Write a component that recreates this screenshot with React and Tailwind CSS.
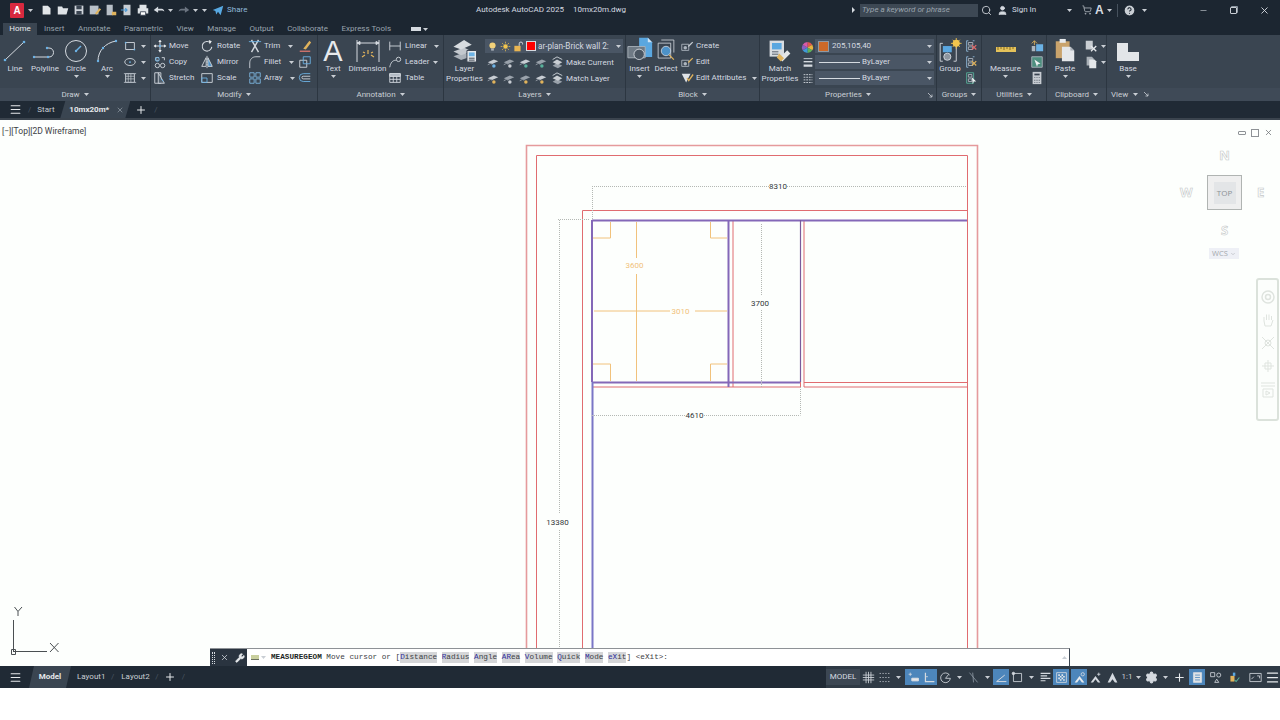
import { ChevronDown, Search, X, Minus, Plus, Menu, Wrench, Settings, HelpCircle, ShoppingCart, User } from "lucide-react"

// ─── Small icon helper, everything is drawn on a 16 box ───────────────────────
function Ic({ size = 14, children, className = "" }) {
  return (
    <svg width={size} height={size} viewBox="0 0 16 16" fill="none" stroke="#d5dae0" strokeWidth="1" className={`shrink-0 mx-[1px] ${className}`}>
      {children}
    </svg>
  )
}

const BLUE = "#6db3e6"
const GOLD = "#e0b35c"
const GREY = "#aeb6bf"

const Doc = () => <Ic><path d="M3 3h6l3 3v7H3z" fill="#e3e6e9" stroke="none" /></Ic>
const Folder = () => <Ic><path d="M2 4h5l1 2h6l-2 7H2z" fill="#dfe3e7" stroke="none" /></Ic>
const Save = () => <Ic><path d="M3 3h10v10H3z" fill="#cfd4da" stroke="none" /><path d="M5 3h6v4H5zM5 9h6v4H5z" fill="#3a4451" stroke="none" /></Ic>
const SaveAs = () => <Ic><path d="M2 3h10v10H2z" fill="#b9c0c8" stroke="none" /><path d="M8 12l5-6 2 1-5 6z" fill={GOLD} stroke="none" /></Ic>
const Sheet = () => <Ic><path d="M3 2h7v12H3z" fill="#b8bfc7" stroke="none" /><path d="M9 10h5v4H9z" fill={GOLD} stroke="none" /></Ic>
const Pub = () => <Ic><path d="M4 2h8v12H4z" fill="#c7cdd3" stroke="none" /><path d="M1 8h7M6 6l2 2-2 2" stroke="#4f9bd6" strokeWidth="1.4" /></Ic>
const Print = () => <Ic><path d="M4 2h8v4H4zM2 6h12v6H2z" fill="#dfe3e7" stroke="none" /><path d="M5 10h6v4H5z" fill="#fff" stroke="#3a4451" /></Ic>
const Undo = () => <Ic><path d="M2 8l5-4v2.500h4c2 0 3 1.500 3 3.500-1-1.500-2-1.500-3-1.500H7V11z" fill="#d5dae0" stroke="none" /></Ic>
const Redo = () => <Ic><path d="M14 8L9 4v2.500H5C3 6.500 2 8 2 10c1-1.500 2-1.500 3-1.500h4V11z" fill="#6b7480" stroke="none" /></Ic>
const ShareIc = () => <Ic><path d="M2 8l12-5-3 11-3-4-2 3-1-4z" fill="#58a9e2" stroke="none" /></Ic>

const LineIc = () => <svg width="26" height="24" viewBox="0 0 26 24" fill="none" stroke="#d5dae0" strokeWidth="1"><path d="M3 21L22 3" /><circle cx="3" cy="21" r="1.300" fill={BLUE} stroke="none" /><circle cx="22" cy="3" r="1.300" fill={BLUE} stroke="none" /></svg>
const PolyIc = () => <svg width="26" height="24" viewBox="0 0 26 24" fill="none" stroke="#d5dae0" strokeWidth="1"><path d="M2 18h15c6 0 6-9 0-9h-2" /><circle cx="2" cy="18" r="1.200" fill={BLUE} stroke="none" /><circle cx="16" cy="18" r="1.200" fill={BLUE} stroke="none" /><circle cx="15" cy="9" r="1.200" fill={BLUE} stroke="none" /></svg>
const CircleIc = () => <svg width="24" height="24" viewBox="0 0 24 24" fill="none" stroke="#d5dae0" strokeWidth="1"><circle cx="12" cy="12" r="10.500" /><path d="M12 12l5-5" stroke={BLUE} strokeWidth="1.500" /><circle cx="12" cy="12" r="1.200" fill={BLUE} stroke="none" /></svg>
const ArcIc = () => <svg width="24" height="24" viewBox="0 0 24 24" fill="none" stroke="#d5dae0" strokeWidth="1"><path d="M3 22C3 12 10 4 21 2" /><circle cx="3" cy="22" r="1.200" fill={BLUE} stroke="none" /><circle cx="8" cy="9" r="1.200" fill={BLUE} stroke="none" /><circle cx="21" cy="2" r="1.200" fill={BLUE} stroke="none" /></svg>
const RectIc = () => <Ic><path d="M3 4h10v8H3z" /><circle cx="3" cy="4" r="1" fill={BLUE} stroke="none" /><circle cx="13" cy="12" r="1" fill={BLUE} stroke="none" /></Ic>
const EllipseIc = () => <Ic><ellipse cx="8" cy="8" rx="6" ry="4" /><circle cx="8" cy="8" r="1" fill={BLUE} stroke="none" /></Ic>
const HatchIc = () => <Ic><path d="M3 3h10v10H3z" /><path d="M3 6h10M3 9h10M6 3v10M9 3v10" strokeWidth=".7" /><path d="M1 3h14M1 13h14" stroke={GREY} /></Ic>

const MoveIc = () => <Ic><path d="M8 1v14M1 8h14" strokeWidth="1.200" /><path d="M8 1L6 3.500h4zM8 15l-2-2.500h4zM1 8l2.500-2v4zM15 8l-2.500-2v4z" fill="#e8ebee" stroke="none" /><circle cx="8" cy="8" r="1.300" fill={BLUE} stroke="none" /></Ic>
const CopyIc = () => <Ic><path d="M3 3h4M3 3v3M3 6h4" /><circle cx="5" cy="5" r="2.200" stroke={BLUE} /><circle cx="5" cy="12" r="2.500" /><circle cx="11" cy="12" r="2.500" /><path d="M10 3h3v3" /></Ic>
const StretchIc = () => <Ic><path d="M2 2h7v12H2z" /><path d="M6 2l7 12H6z" fill="#55626f" /><path d="M9 9l3 3" stroke={BLUE} /></Ic>
const RotateIc = () => <Ic><path d="M12 4.500A5.500 5.500 0 1 0 13.500 9" strokeWidth="1.200" /><path d="M10 1l3.500 1.500L11 6z" fill="#e8ebee" stroke="none" /></Ic>
const MirrorIc = () => <Ic><path d="M7 3L2 13h5z" /><path d="M9 3l5 10H9z" fill="#4d92c8" /><path d="M8 1v14" strokeDasharray="2 1" /></Ic>
const ScaleIc = () => <Ic><path d="M2 3h12v10H2z" /><path d="M2 8h6v5H2z" stroke={BLUE} /></Ic>
const TrimIc = () => <Ic><path d="M4 1l8 14M12 1L4 15" strokeWidth="1.600" /><path d="M1 3h14" stroke={BLUE} /></Ic>
const FilletIc = () => <Ic><path d="M2 15V9c0-4 3-7 7-7h5" /></Ic>
const ArrayIc = () => <Ic><path d="M2 2h5v5H2zM9 2h5v5H9zM2 9h5v5H2zM9 9h5v5H9z" stroke="#7fb9e4" /></Ic>
const EraseIc = () => <Ic><path d="M2 14h12" stroke="#d9776f" strokeWidth="1.500" /><path d="M6 11l7-9 2 2-6 8z" fill={GOLD} stroke="none" /></Ic>
const ExplodeIc = () => <Ic><path d="M2 6h8v8H2z" /><path d="M6 2h8v8H6z" stroke={BLUE} /></Ic>
const OffsetIc = () => <Ic><path d="M14 3H6a4 4 0 0 0 0 9h8" stroke={BLUE} /><path d="M14 6H6a1.500 1.500 0 0 0 0 3h8" /></Ic>

const DimIc = () => <svg width="24" height="24" viewBox="0 0 24 24" fill="none" stroke="#d5dae0" strokeWidth="1"><path d="M1 1v22M23 1v22M1 4h22" /><path d="M1 4l3-1.500v3zM23 4l-3-1.500v3z" fill="#d5dae0" /><path d="M6 18l3-2M18 18l-3-2M12 15v-4M7 13l2 1M17 13l-2 1" stroke={GOLD} strokeWidth="1.200" /></svg>
const LinearIc = () => <Ic><path d="M2 3v10M14 3v10M2 8h12" /></Ic>
const LeaderIc = () => <Ic><path d="M2 14C3 9 5 6 9 6" /><circle cx="12" cy="5" r="2.500" /></Ic>
const TableIc = () => <Ic><path d="M2 3h12v10H2zM2 6h12M2 9.500h12M6 6v7M10 6v7" /><path d="M2 3h12v3H2z" fill="#aeb6bf" /></Ic>

const LayersBig = () => <svg width="30" height="25" viewBox="0 0 30 26"><path d="M3 19l11-4 8 4-11 4z" fill="#aab1b9" /><path d="M3 14l11-4 8 4-11 4z" fill="#c3c8ce" /><path d="M3 9l11-7 8 5-11 5z" fill="#d8dce0" /><path d="M17 13h10v12H17z" fill="#e6e9ec" stroke="#3a4451" /><path d="M19 15h6v4h-6z" fill={BLUE} /><path d="M19 21h6M19 23h6" stroke="#3a4451" /></svg>
const Layer = ({ c = BLUE, k = "#c8cdd3" }) => <Ic><path d="M2 7l7-3 5 2-7 3z" fill={k} stroke="none" /><path d="M2 10l3-1.500 2 .8" stroke="#9aa2ab" /><circle cx="9" cy="11.500" r="2" fill={c} stroke="none" /></Ic>
const Bulb = () => <Ic size={11}><circle cx="8" cy="6.500" r="4.500" fill="#f3d27a" stroke="none" /><path d="M6 11h4v3H6z" fill="#a8afb7" stroke="none" /></Ic>
const Sun = () => <Ic size={11}><circle cx="8" cy="8" r="3.200" fill="#f1c54e" stroke="none" /><path d="M8 1v2.500M8 12.500V15M1 8h2.500M12.500 8H15M3 3l2 2M11 11l2 2M13 3l-2 2M5 11l-2 2" stroke="#f1c54e" /></Ic>
const Lock = () => <Ic size={11}><path d="M2 7h9v8H2z" fill="#e9b552" stroke="none" /><path d="M9 7V4a2.500 2.500 0 0 1 5 0v1" stroke="#e0e3e6" strokeWidth="1.300" /></Ic>
const Stack = () => <Ic><path d="M3 11l5-3 6 3-5 3z" fill="#9aa2ab" stroke="none" /><path d="M3 7l5-3 6 3-5 3z" fill="#c9ced3" stroke="none" /><path d="M3 4l5-3 6 3" stroke="#d5dae0" /></Ic>

const InsertBig = () => <svg width="26" height="26" viewBox="0 0 30 30"><path d="M14 1h10l5 5v17H14z" fill="#5aa7e0" /><path d="M24 1v5h5z" fill="#cfe4f5" /><path d="M1 11h20v13H1z" fill="#6f7a85" stroke="#aeb6bf" /><circle cx="14" cy="20" r="6" fill="#4a5561" stroke="#d5dae0" /></svg>
const DetectBig = () => <svg width="22" height="24" viewBox="0 0 28 30" fill="none" stroke="#d5dae0"><path d="M8 1h16v16" /><path d="M4 5h16v19H4z" /><circle cx="14" cy="15" r="6" fill="#4d92c8" /><path d="M18 20l6 6" strokeWidth="1.600" stroke={GOLD} /></svg>
const BlockIc = ({ a = BLUE }) => <Ic><path d="M2 6h8v7H2z" stroke="#aeb6bf" /><circle cx="6" cy="10" r="2" fill="#aeb6bf" stroke="none" /><path d="M9 8l5-5 1 1-5 5z" fill={a} stroke="none" /></Ic>
const AttrIc = () => <Ic><path d="M2 3h10l-5 10z" fill="#dfe3e7" stroke="none" /><path d="M8 8l2 3 5-7" stroke={GOLD} strokeWidth="1.500" /></Ic>

const MatchBig = () => <svg width="24" height="24" viewBox="0 0 30 30"><path d="M2 2h18v20H2z" fill="#d9dde1" /><path d="M5 5h12v8H5z" fill="#5aa7e0" /><path d="M5 16h8M5 19h8" stroke="#3a4451" /><path d="M14 24l10-10 4 4-10 10z" fill="#e4e6e8" /><path d="M14 18l6 6-4 4-5-5z" fill={GOLD} /></svg>
const Wheel = () => <svg width="13" height="13" viewBox="0 0 14 14"><path d="M7 7V1a6 6 0 0 1 5.200 3z" fill="#e2574c" /><path d="M7 7l5.200-3a6 6 0 0 1 0 6z" fill="#e8b33f" /><path d="M7 7l5.200 3A6 6 0 0 1 7 13z" fill="#5fb05a" /><path d="M7 7v6a6 6 0 0 1-5.200-3z" fill="#3f9ad6" /><path d="M7 7l-5.200 3a6 6 0 0 1 0-6z" fill="#8a5ec4" /><path d="M7 7L1.800 4A6 6 0 0 1 7 1z" fill="#d95aa8" /></svg>
const WeightIc = () => <Ic><path d="M3 3h10" strokeWidth="1" /><path d="M3 6.500h10" strokeWidth="1.600" /><path d="M3 11h10" strokeWidth="2.600" /></Ic>
const TypeIc = () => <Ic><path d="M3 3h10M3 6h10M3 9h10M3 12h10" strokeDasharray="2 1" /></Ic>

const GroupBig = () => <svg width="24" height="25" viewBox="0 0 26 28" fill="none" stroke="#d5dae0"><path d="M5 6H2v20h3M17 6h3v20h-3" /><path d="M5 9h10v7H5z" fill="#5aa7e0" stroke="none" /><circle cx="10" cy="21" r="4" fill="#8d96a0" /><circle cx="20" cy="6" r="4" fill="#f1c54e" stroke="none" /><path d="M20 0v12M14 6h12M16 2l8 8M24 2l-8 8" stroke="#f1c54e" /></svg>
const GroupSm = ({ c = "#e06a6a" }) => <Ic><path d="M5 2H3v12h2M10 2h2" stroke="#8fb8d8" /><path d="M5 4h5v3H5zM5 9h5v3H5z" stroke="#aeb6bf" /><path d="M9 7l5 5M14 7l-5 5" stroke={c} strokeWidth="1.400" /></Ic>
const GroupHand = () => <Ic><path d="M3 2h8v12H3z" stroke="#58b09a" /><path d="M5 4h4v3H5zM5 9h4v3H5z" stroke="#aeb6bf" /><path d="M9 7l5 5-3 0-1 3z" fill="#eef0f2" stroke="none" /></Ic>

const RulerBig = () => <svg width="20" height="8" viewBox="0 0 20 8"><path d="M0 0h20v5H0z" fill="#e4c25a" /><path d="M2 0v3M5 0v2M8 0v3M11 0v2M14 0v3M17 0v2" stroke="#8a6e23" /></svg>
const QuickIc = () => <Ic><path d="M7 6h8v8H7z" fill="#6bb2e5" stroke="none" /><path d="M2 5l3-3 3 3M5 2v5" stroke={GOLD} /><path d="M2 8h4v6H2z" fill="#aeb6bf" stroke="none" /></Ic>
const CountIc = () => <Ic><path d="M2 2h12v12H2z" fill="#4e8f7f" stroke="#aeb6bf" /><path d="M5 5l7 5-3 .5-1 3z" fill="#eef0f2" stroke="none" /></Ic>
const CalcIc = () => <Ic><path d="M3 1h10v14H3z" fill="#c7ccd2" stroke="none" /><path d="M5 3h6v2H5z" fill="#3a4451" stroke="none" /><path d="M5 7h1v1H5zM7.500 7h1v1h-1zM10 7h1v1h-1zM5 10h1v1H5zM7.500 10h1v1h-1zM10 10h1v1h-1zM5 12.500h1v1H5zM7.500 12.500h1v1h-1zM10 12.500h1v1h-1z" fill="#3a4451" stroke="none" /></Ic>
const PasteBig = () => <svg width="20" height="25" viewBox="0 0 26 30"><path d="M1 3h18v22H1z" fill="#c9a36c" /><path d="M6 0h8v5H6z" fill="#e8ebee" /><path d="M9 10h11l5 5v14H9z" fill="#e4e7ea" /><path d="M20 10v5h5z" fill="#a9b0b7" /></svg>
const CutIc = () => <Ic><path d="M2 2h8v10H2z" fill="#c9ced3" stroke="none" /><path d="M8 8l6 6M14 8l-6 6" stroke="#e8ebee" strokeWidth="1.500" /></Ic>
const CopyClip = () => <Ic><path d="M3 2h6l2 2v8H3z" fill="#aab1b8" stroke="none" /><path d="M6 5h6l2 2v8H6z" fill="#e4e7ea" stroke="none" /></Ic>
const BaseBig = () => <svg width="22" height="18" viewBox="0 0 22 18"><path d="M0 0h11v9h11v9H0z" fill="#e2e5e8" /></svg>

const Caret = ({ className = "" }) => <svg width="5" height="3" viewBox="0 0 5 3" className={`shrink-0 ${className}`}><path d="M0 0h5L2.500 3z" fill="#c9ced4" /></svg>
const Launch = () => <svg width="5" height="5" viewBox="0 0 5 5" fill="none" stroke="#c9ced4" strokeWidth=".8"><path d="M0 0l4 4M4 1.500V4H1.500" /></svg>

// ─── Ribbon pieces ────────────────────────────────────────────────────────────
function Panel({ width, title, launcher, children, titleClass = "justify-center" }) {
  return (
    <div className={`${width} shrink-0 flex flex-col border-r border-[#2c3641]`}>
      <div className="h-[53px] flex">{children}</div>
      <div className={`h-[13px] flex items-center gap-[4px] bg-[#3f4a57] text-[8px] text-[#c9ced4] relative ${titleClass}`}>
        <span>{title}</span>
        <Caret />
        {launcher && <span className="absolute right-[3px] top-[5px]"><Launch /></span>}
      </div>
    </div>
  )
}

function Large({ width, icon, label, caret }) {
  return (
    <div className={`${width} shrink-0 flex flex-col items-center pt-[3px]`}>
      <div className="h-[25px] flex items-end justify-center">{icon}</div>
      <div className="text-[8px] leading-[10px] text-center text-[#d5dae0] whitespace-pre-line mt-[1px]">{label}</div>
      {caret && <Caret className="mt-[1px]" />}
    </div>
  )
}

function Row({ icon, label, caret, gap = "ml-[1px]" }) {
  return (
    <div className="h-[16px] flex items-center whitespace-nowrap text-[8px] text-[#d5dae0]">
      {icon}
      {label && <span className={gap}>{label}</span>}
      {caret && <Caret className={caret} />}
    </div>
  )
}

function Col({ width, children }) {
  return <div className={`${width} shrink-0 flex flex-col pt-[3px]`}>{children}</div>
}

function Ribbon() {
  return (
    <div className="h-[66px] flex bg-[#3a4551]">
      <Panel width="w-[151px]" title="Draw">
        <Large width="w-[30px]" icon={<LineIc />} label="Line" />
        <Large width="w-[30px]" icon={<PolyIc />} label="Polyline" />
        <Large width="w-[32px]" icon={<CircleIc />} label="Circle" caret />
        <Large width="w-[30px]" icon={<ArcIc />} label="Arc" caret />
        <Col width="w-[28px]">
          <Row icon={<RectIc />} caret="ml-[3px]" />
          <Row icon={<EllipseIc />} caret="ml-[3px]" />
          <Row icon={<HatchIc />} caret="ml-[3px]" />
        </Col>
      </Panel>
      <Panel width="w-[167px]" title="Modify">
        <div className="w-[1px]" />
        <Col width="w-[47px]">
          <Row icon={<MoveIc />} label="Move" />
          <Row icon={<CopyIc />} label="Copy" />
          <Row icon={<StretchIc />} label="Stretch" />
        </Col>
        <Col width="w-[48px]">
          <Row icon={<RotateIc />} label="Rotate" gap="ml-[2px]" />
          <Row icon={<MirrorIc />} label="Mirror" gap="ml-[2px]" />
          <Row icon={<ScaleIc />} label="Scale" gap="ml-[2px]" />
        </Col>
        <Col width="w-[50px]">
          <Row icon={<TrimIc />} label="Trim" caret="ml-[8px]" />
          <Row icon={<FilletIc />} label="Fillet" caret="ml-[8px]" />
          <Row icon={<ArrayIc />} label="Array" caret="ml-[7px]" />
        </Col>
        <Col width="w-[16px]">
          <Row icon={<EraseIc />} />
          <Row icon={<ExplodeIc />} />
          <Row icon={<OffsetIc />} />
        </Col>
      </Panel>
      <Panel width="w-[126px]" title="Annotation">
        <Large width="w-[30px]" icon={<span className="text-[29px] leading-[24px] text-[#e6e9ec] font-['Liberation_Sans']">A</span>} label="Text" caret />
        <Large width="w-[39px]" icon={<DimIc />} label="Dimension" />
        <Col width="w-[56px]">
          <Row icon={<LinearIc />} label="Linear" gap="ml-[2px]" caret="ml-[7px]" />
          <Row icon={<LeaderIc />} label="Leader" gap="ml-[2px]" caret="ml-[4px]" />
          <Row icon={<TableIc />} label="Table" gap="ml-[2px]" />
        </Col>
      </Panel>
      <Panel width="w-[182px]" title="Layers">
        <Large width="w-[41px]" icon={<LayersBig />} label={"Layer\nProperties"} />
        <div className="w-[140px] flex flex-col pt-[4px]">
          <div className="w-[138px] h-[14px] bg-[#4a5665] flex items-center pl-[1px] text-[8.200px] text-[#d5dae0] whitespace-nowrap">
            <Bulb /><Sun /><Lock />
            <span className="w-[10px] h-[10px] bg-[#f00] border border-[#d5dae0] ml-[1px] shrink-0" />
            <span className="ml-[2px]">ar-plan-Brick wall 2:</span>
            <Caret className="ml-auto mr-[2px]" />
          </div>
          <div className="h-[17px] flex items-center mt-[1px] text-[8px] text-[#d5dae0] whitespace-nowrap">
            <Layer /><Layer k="#9aa2ab" c="#c8cdd3" /><Layer c="#58b09a" /><Layer c="#58b09a" k="#9aa2ab" /><Stack />
            <span className="ml-[1px]">Make Current</span>
          </div>
          <div className="h-[16px] flex items-center text-[8px] text-[#d5dae0] whitespace-nowrap">
            <Layer c={GOLD} /><Layer k="#9aa2ab" c="#c8cdd3" /><Layer c={GOLD} k="#9aa2ab" /><Layer c={GOLD} /><Stack />
            <span className="ml-[1px]">Match Layer</span>
          </div>
        </div>
      </Panel>
      <Panel width="w-[134px]" title="Block">
        <Large width="w-[27px]" icon={<InsertBig />} label="Insert" caret />
        <Large width="w-[26px]" icon={<DetectBig />} label="Detect" />
        <Col width="w-[78px]">
          <Row icon={<BlockIc a="#c8cdd3" />} label="Create" />
          <Row icon={<BlockIc a={GOLD} />} label="Edit" />
          <Row icon={<AttrIc />} label="Edit Attributes" caret="ml-[6px]" />
        </Col>
      </Panel>
      <Panel width="w-[177px]" title="Properties" launcher>
        <Large width="w-[40px]" icon={<MatchBig />} label={"Match\nProperties"} />
        <div className="w-[15px] flex flex-col pt-[4px] items-center">
          <div className="h-[16px] flex items-center"><Wheel /></div>
          <div className="h-[16px] flex items-center"><WeightIc /></div>
          <div className="h-[16px] flex items-center"><TypeIc /></div>
        </div>
        <div className="w-[119px] flex flex-col gap-[2px] pt-[4px] text-[8px] text-[#d5dae0]">
          <div className="h-[14px] bg-[#4a5665] flex items-center pl-[3px]">
            <span className="w-[11px] h-[11px] bg-[#cd6928] border border-[#8e99a4]" />
            <span className="ml-[3px]">205,105,40</span>
            <Caret className="ml-auto mr-[2px]" />
          </div>
          <div className="h-[14px] bg-[#4a5665] flex items-center pl-[4px]">
            <span className="w-[41px] h-[1px] bg-[#d5dae0]" />
            <span className="ml-[2px]">ByLayer</span>
            <Caret className="ml-auto mr-[2px]" />
          </div>
          <div className="h-[14px] bg-[#4a5665] flex items-center pl-[4px]">
            <span className="w-[41px] h-[1px] bg-[#d5dae0]" />
            <span className="ml-[2px]">ByLayer</span>
            <Caret className="ml-auto mr-[2px]" />
          </div>
        </div>
      </Panel>
      <Panel width="w-[45px]" title="Groups">
        <Large width="w-[26px]" icon={<GroupBig />} label="Group" />
        <Col width="w-[18px]">
          <Row icon={<GroupSm />} />
          <Row icon={<GroupSm c={GOLD} />} />
          <Row icon={<GroupHand />} />
        </Col>
      </Panel>
      <Panel width="w-[65px]" title="Utilities">
        <Large width="w-[47px]" icon={<span className="pb-[8px]"><RulerBig /></span>} label="Measure" caret />
        <Col width="w-[16px]">
          <Row icon={<QuickIc />} />
          <Row icon={<CountIc />} />
          <Row icon={<CalcIc />} />
        </Col>
      </Panel>
      <Panel width="w-[60px]" title="Clipboard">
        <Large width="w-[36px]" icon={<PasteBig />} label="Paste" caret />
        <Col width="w-[22px]">
          <Row icon={<CutIc />} caret="ml-[2px]" />
          <Row icon={<CopyClip />} caret="ml-[2px]" />
        </Col>
      </Panel>
      <div className="flex-1 flex flex-col">
        <div className="h-[53px] flex">
          <Large width="w-[42px]" icon={<span className="pb-[2px]"><BaseBig /></span>} label="Base" caret />
        </div>
        <div className="h-[13px] flex items-center bg-[#3f4a57] text-[8px] text-[#c9ced4] pl-[4px]">
          <span>View</span>
          <Caret className="ml-[5px]" />
          <span className="ml-[6px]"><Launch /></span>
        </div>
      </div>
    </div>
  )
}

// ─── Title bar + tabs ─────────────────────────────────────────────────────────
function TitleBar() {
  return (
    <div className="h-[20px] flex items-center bg-[#1c2631] text-[8px] text-[#c9ced4] whitespace-nowrap">
      <div className="w-[476px] shrink-0 flex items-center">
        <div className="w-[14px] h-[15px] ml-[10px] bg-[#d8293f] text-white font-bold text-[10px] leading-[15px] text-center rounded-[1px] font-['Liberation_Sans']">A</div>
        <Caret className="ml-[4px]" />
        <div className="flex ml-[6px]">
          <Doc /><Folder /><Save /><SaveAs /><Sheet /><Pub /><Print /><Undo />
        </div>
        <Caret className="ml-[1px]" />
        <div className="ml-[3px]"><Redo /></div>
        <Caret className="ml-[1px]" />
        <Caret className="ml-[4px]" />
        <div className="ml-[3px]"><ShareIc /></div>
        <span className="ml-[1px] text-[#8fb8d8]">Share</span>
      </div>
      <div className="w-[379px] shrink-0 flex items-center text-[#d5dae0]">
        <span>Autodesk AutoCAD 2025</span>
        <span className="ml-[9px]">10mx20m.dwg</span>
        <span className="ml-auto w-0 h-0 border-y-[3px] border-y-transparent border-l-[3px] border-l-[#d5dae0]" />
      </div>
      <div className="ml-[5px] w-[118px] h-[13px] bg-[#3d4854] flex items-center pl-[2px] italic text-[#9aa4ae]">Type a keyword or phrase</div>
      <Search size={11} className="ml-[3px] text-[#c9ced4]" />
      <User size={11} fill="#d5dae0" className="ml-[5px] text-[#d5dae0]" />
      <span className="ml-[4px] w-[55px] text-[#d5dae0]">Sign In</span>
      <Caret />
      <ShoppingCart size={10} className="ml-[10px] text-[#aab1b8]" />
      <span className="ml-[3px] text-[12px] leading-none font-bold text-[#d5dae0] font-['Liberation_Sans']">A</span>
      <Caret className="ml-[3px]" />
      <span className="ml-[5px] w-[1px] h-[13px] bg-[#46515d]" />
      <HelpCircle size={13} fill="#c9ced4" className="ml-[5px] text-[#1c2631]" />
      <Caret className="ml-[6px]" />
      <Minus size={9} className="ml-[52px] text-[#aab1b8]" />
      <span className="ml-[22px] w-[7px] h-[7px] border border-[#c9ced4] rounded-[1px] shadow-[1px_-1px_0_#8e99a4]" />
      <X size={11} className="ml-[22px] text-[#d5dae0]" />
    </div>
  )
}

const TABS = ["Insert", "Annotate", "Parametric", "View", "Manage", "Output", "Collaborate", "Express Tools"]

function RibbonTabs() {
  return (
    <div className="h-[15px] flex items-end bg-[#1c2631] pl-[3px] text-[8px] text-[#9aa4ae] whitespace-nowrap">
      <div className="h-[12px] w-[34px] bg-[#3a4551] text-[#e6e9ec] flex items-center justify-center">Home</div>
      <div className="flex gap-[13.500px] ml-[7px] h-[12px] items-center">
        {TABS.map((t) => <span key={t}>{t}</span>)}
      </div>
      <div className="h-[12px] flex items-center ml-[20px]">
        <span className="w-[10px] h-[4px] bg-[#d5dae0]" />
        <Caret className="ml-[2px]" />
      </div>
    </div>
  )
}

function FileTabs() {
  return (
    <div className="h-[19px] flex items-center bg-[#202a35] text-[8px] text-[#c9ced4] whitespace-nowrap border-b-2 border-[#3b444e]">
      <Menu size={13} className="ml-[9px] text-[#e6e9ec]" />
      <span className="ml-[6px] text-[#4a5561]">/</span>
      <span className="ml-[6px] w-[17px]">Start</span>
      <div className="ml-[6px] w-[70px] h-full bg-[#3a4551] flex items-center pl-[9px] [clip-path:polygon(5px_0,100%_0,calc(100%-5px)_100%,0_100%)]">
        <span className="font-bold text-[#e6e9ec] w-[42px]">10mx20m*</span>
        <X size={8} className="ml-[5px] text-[#9aa4ae]" />
      </div>
      <Plus size={12} className="ml-[5px] text-[#e6e9ec]" />
      <span className="ml-[7px] text-[#4a5561]">/</span>
    </div>
  )
}

// ─── Drawing canvas ───────────────────────────────────────────────────────────
function Plan() {
  const red = "#e06c70"
  const purple = "#8468b8"
  const orange = "#f1c27c"
  const dim = "#b4b8b4"
  return (
    <svg className="absolute inset-0" width="1280" height="546" viewBox="0 120 1280 546" fill="none" fontFamily="Roboto, sans-serif" fontSize="8">
      {/* walls */}
      <path d="M526.500 648V145.500H977.500V648" stroke="#e59a9c" strokeWidth="1.600" />
      <path d="M536.500 648V155.500H967.500V648" stroke={red} />
      <path d="M582.500 648V210.500H967.500" stroke={red} />
      <path d="M733 220V387M804 220V387M592 387H800.500V220M804 382.500H967M804 387H967" stroke={red} />
      <path d="M592 220.500H967M592 220V382M592 382.500H800M728.500 220V387" stroke={purple} strokeWidth="2" />
      <path d="M592.500 382V648" stroke="#7a76c6" strokeWidth="2" />
      <path d="M800.500 220V382" stroke="#7b5a9c" strokeWidth="1.200" />

      {/* room marks */}
      <path d="M593 238H610.500V222M710.500 222V238H727M593 364H610.500V381M727 364H710.500V381" stroke={orange} />
      <path d="M636.500 222V258M636.500 274V381M594 311H670M695 311H727" stroke={orange} />
      <text x="634.500" y="268" fill={orange} textAnchor="middle">3600</text>
      <text x="680.500" y="314" fill={orange} textAnchor="middle">3010</text>

      {/* dimensions */}
      <g stroke={dim} strokeDasharray="1 1">
        <path d="M592 186.500H769M787 186.500H967M592.500 186V219" />
        <path d="M558 219.500H590M559.500 220V514M559.500 530V648" />
        <path d="M761.500 224V296M761.500 310V387" />
        <path d="M592 415.500H686M704 415.500H800.500M800.500 387V415" />
      </g>
      <g fill="#33373a" textAnchor="middle">
        <text x="778" y="189">8310</text>
        <text x="760" y="306">3700</text>
        <text x="694.500" y="418">4610</text>
        <text x="557.500" y="524.500">13380</text>
      </g>

      {/* UCS icon */}
      <path d="M13.500 620V652M14 651.500H47" stroke="#4a4f52" />
      <path d="M11.500 649.500h4v5h-4z" stroke="#4a4f52" />
      <path d="M50 643L58.500 652M58.500 643L50 652M14.500 607L18 611.500L22 607M18 611.500V616" stroke="#4a4f52" />
    </svg>
  )
}

function ViewCube() {
  return (
    <div className="absolute left-[1180px] top-[27px] w-[90px] flex flex-col items-center font-['Open_Sans'] font-bold text-[13px] leading-none text-white [-webkit-text-stroke:0.600px_#c4c8c8]">
      <span className="ml-[-1px] h-[28px] pt-[2px]">N</span>
      <div className="w-full flex items-center justify-between pr-[3px]">
        <span className="w-[12px]">W</span>
        <div className="w-[35px] h-[35px] border border-[#b0b4b2] bg-[#efefef] flex items-center justify-center">
          <span className="w-[22px] h-[22px] bg-[#e3e5e7] flex items-center justify-center font-normal text-[8px] text-[#8c9296] [-webkit-text-stroke:0]">TOP</span>
        </div>
        <span className="w-[10px]">E</span>
      </div>
      <span className="ml-[-1px] mt-[14px]">S</span>
      <div className="ml-[-2px] mt-[11px] w-[30px] h-[11px] bg-[#eef0f6] flex items-center justify-center gap-[2px] font-normal text-[7.500px] text-[#a4a9ad] [-webkit-text-stroke:0]">
        WCS <ChevronDown size={6} />
      </div>
    </div>
  )
}

function NavBar() {
  return (
    <div className="absolute left-[1256px] top-[158px] w-[23px] h-[143px] border-2 border-[#dbe2db] rounded-[3px] bg-[#fcfefc] flex flex-col items-center pt-[9px] gap-[7px]">
      <svg width="16" height="16" viewBox="0 0 16 16" fill="none" stroke="#dfe4df" strokeWidth="1.500"><circle cx="8" cy="8" r="6" /><circle cx="8" cy="8" r="2.500" /></svg>
      <svg width="16" height="16" viewBox="0 0 16 16" fill="none" stroke="#dfe4df"><path d="M4 9V5M6.500 8V2.500M9 8V2.500M11.500 8V4M4 9l1 5h6l2-6" /></svg>
      <svg width="16" height="16" viewBox="0 0 16 16" fill="none" stroke="#dfe4df"><path d="M2 2l12 12M14 2L2 14" /><circle cx="8" cy="8" r="3" /></svg>
      <svg width="16" height="16" viewBox="0 0 16 16" fill="none" stroke="#dfe4df"><path d="M8 2v12M2 8h12M5 5h6v6H5z" /></svg>
      <svg width="16" height="18" viewBox="0 0 16 18" fill="none" stroke="#dfe4df"><path d="M1 2h14M1 5h14M3 8h10v8H3z" /><path d="M6 10l4 2-4 2z" /></svg>
    </div>
  )
}

const OPTIONS = [
  ["D", "istance"], ["R", "adius"], ["A", "ngle"], ["AR", "ea"],
  ["V", "olume"], ["Q", "uick"], ["M", "ode"], ["eX", "it"],
]

function CommandLine() {
  return (
    <div className="absolute left-[210px] bottom-0 w-[860px] h-[18px] flex border-t border-[#8e9296] border-r border-r-[#3a4551] bg-white font-['Liberation_Mono'] text-[7.700px] text-[#3c4044] whitespace-nowrap">
      <div className="w-[37px] h-full bg-[#2a3440] flex items-center pl-[2px] shrink-0">
        <span className="w-[3px] h-[12px] border-x border-dotted border-[#d5dae0]" />
        <X size={9} className="ml-[5px] text-[#d5dae0]" />
        <Wrench size={10} fill="#e6e9ec" className="ml-[6px] text-[#e6e9ec]" />
      </div>
      <div className="flex-1 flex items-center pl-[4px] relative">
        <span className="w-[8px] h-[5px] bg-[#c9cf9e] border-b border-[#6b7060]" />
        <Caret className="ml-[2px]" />
        <span className="ml-[5px] font-bold text-[#1c1f24]">MEASUREGEOM</span>
        <span>&nbsp;Move cursor or [</span>
        {OPTIONS.map(([k, rest], i) => (
          <span key={k} className="flex">
            {i > 0 && <span>&nbsp;</span>}
            <span className="bg-[#d5d6d8]"><span className="text-[#2f2f9c]">{k}</span>{rest}</span>
          </span>
        ))}
        <span>] &lt;eXit&gt;:</span>
        <Caret className="absolute right-[2px] top-[7px] rotate-180" />
      </div>
    </div>
  )
}

// ─── Status bar ───────────────────────────────────────────────────────────────
const St = ({ children, active, width = "w-[16px]" }) => (
  <div className={`${width} h-[16px] shrink-0 flex items-center justify-center ${active ? "bg-[#4d86bb]" : ""}`}>{children}</div>
)
const SC = () => <St width="w-[12px]"><Caret /></St>

function StatusBar() {
  return (
    <div className="h-[22px] flex items-center bg-[#202a35] text-[8px] text-[#c9ced4] whitespace-nowrap">
      <Menu size={13} className="ml-[9px] text-[#e6e9ec]" />
      <div className="ml-[7px] w-[42px] h-[22px] bg-[#3a4551] flex items-center justify-center font-bold text-[#e6e9ec] [clip-path:polygon(5px_0,100%_0,calc(100%-5px)_100%,0_100%)]">Model</div>
      <span className="ml-[6px] w-[28px]">Layout1</span>
      <span className="ml-[6px] text-[#4a5561]">/</span>
      <span className="ml-[7px] w-[28px]">Layout2</span>
      <span className="ml-[6px] text-[#4a5561]">/</span>
      <Plus size={12} className="ml-[5px] text-[#e6e9ec]" />
      <span className="ml-[6px] text-[#4a5561]">/</span>
      <div className="ml-auto w-[454px] h-full bg-[#2f3a45] flex items-center">
        <div className="w-[34px] h-[16px] bg-[#3c4753] flex items-center justify-center text-[#d5dae0]">MODEL</div>
        <St><Ic size={13}><path d="M1 5h14M1 8h14M1 11h14M5 1v14M8 1v14M11 1v14" /></Ic></St>
        <St><Ic size={13}><path d="M2 3h12M2 8h12M2 13h12" strokeDasharray="1.500 2" /></Ic></St>
        <SC /><div className="w-[1px]" />
        <St active><Ic size={13}><path d="M2 4h4M4 2v4M6 9h8v3H6z" /><path d="M6 9h8v3H6z" fill="#e6e9ec" /></Ic></St>
        <St active><Ic size={13}><path d="M3 2v11h11" strokeWidth="1.500" /><path d="M3 7h3" /></Ic></St>
        <St><Ic size={13}><path d="M13 5a6 6 0 1 0 1 4H8l4-5" /></Ic></St>
        <SC />
        <St><Ic size={13}><path d="M3 2l10 12M7 2l1 12" stroke="#8e99a4" /></Ic></St>
        <SC />
        <St active><Ic size={13}><path d="M2 13h12M2 13L12 5" strokeWidth="1.200" /></Ic></St>
        <St><Ic size={13}><path d="M3 3h10v10H3z" /><circle cx="3" cy="3" r="1.500" fill="#d5dae0" /></Ic></St>
        <SC />
        <St><Ic size={13}><path d="M2 3h12M2 6h8M2 9h12M2 12h6" strokeWidth="1.500" /></Ic></St>
        <St active><Ic size={13}><path d="M2 2h12v12H2z" /><path d="M4 4h2v2H4zM8 4h2v2H8zM6 6h2v2H6zM10 6h2v2h-2zM4 8h2v2H4zM8 8h2v2H8zM6 10h2v2H6zM10 10h2v2h-2z" fill="#e6e9ec" stroke="none" /></Ic></St>
        <div className="w-[2px]" />
        <St active><Ic size={13}><path d="M8 6L2 14h3l3-4 3 4h3z" fill="#e6e9ec" stroke="none" /><circle cx="12" cy="4" r="2" /></Ic></St>
        <St><Ic size={13}><path d="M8 6L2 14h3l3-4 3 4h3z" fill="#d5dae0" stroke="none" /><path d="M12 2v4M10 4h4" /></Ic></St>
        <div className="w-[1px]" />
        <St><Ic size={13}><path d="M8 2L2 14h3l3-4 3 4h3z" fill="#d5dae0" stroke="none" /></Ic></St>
        <St width="w-[14px]"><span>1:1</span></St>
        <St width="w-[9px]"><Caret /></St>
        <St><Settings size={13} fill="#d5dae0" className="text-[#d5dae0]" /></St>
        <SC />
        <St><Plus size={13} className="text-[#e6e9ec]" /></St>
        <div className="w-[2px]" />
        <St active><Ic size={13}><path d="M3 2h10v12H3z" fill="#dfe3e7" /><path d="M5 5h6M5 8h6M5 11h6" stroke="#4d86bb" /></Ic></St>
        <div className="w-[2px]" />
        <St><Ic size={13}><path d="M2 2h5v5H2z" /><circle cx="12" cy="5" r="2.500" /><path d="M7 14l2.500-4 2.500 4z" /></Ic></St>
        <div className="w-[3px]" />
        <St><Ic size={13}><path d="M3 6h5v7H3z" fill="#e0b35c" stroke="none" /><path d="M6 2h3v4H6z" fill="#5aa7e0" stroke="none" /><path d="M8 11l2 2 4-5" stroke="#58b09a" strokeWidth="1.300" /></Ic></St>
        <div className="w-[5px]" />
        <St><Ic size={13}><path d="M1 3h14v10H1z" /><path d="M3 10l3-3M10 6l3 0v3" /></Ic></St>
        <div className="w-[1px]" />
        <St><Menu size={15} className="text-[#e6e9ec]" /></St>
      </div>
    </div>
  )
}

// ─── Main ─────────────────────────────────────────────────────────────────────
export default function App() {
  return (
    <div className="w-[1280px] h-[720px] flex flex-col overflow-hidden bg-white font-['Roboto',sans-serif]">
      <TitleBar />
      <RibbonTabs />
      <Ribbon />
      <FileTabs />
      <div className="relative h-[546px] bg-[#fdfffd] text-[8.500px] text-[#3c4044]">
        <div className="absolute left-[2px] top-[5px]">[−][Top][2D Wireframe]</div>
        <Plan />
        <div className="absolute left-[1238px] top-[8px] flex items-center gap-[5px]">
          <span className="w-[8px] h-[4px] border border-[#8e9296] rounded-[1px]" />
          <span className="w-[8px] h-[8px] border border-[#8e9296]" />
          <X size={9} className="text-[#6b7074]" />
        </div>
        <ViewCube />
        <NavBar />
        <CommandLine />
      </div>
      <StatusBar />
    </div>
  )
}
